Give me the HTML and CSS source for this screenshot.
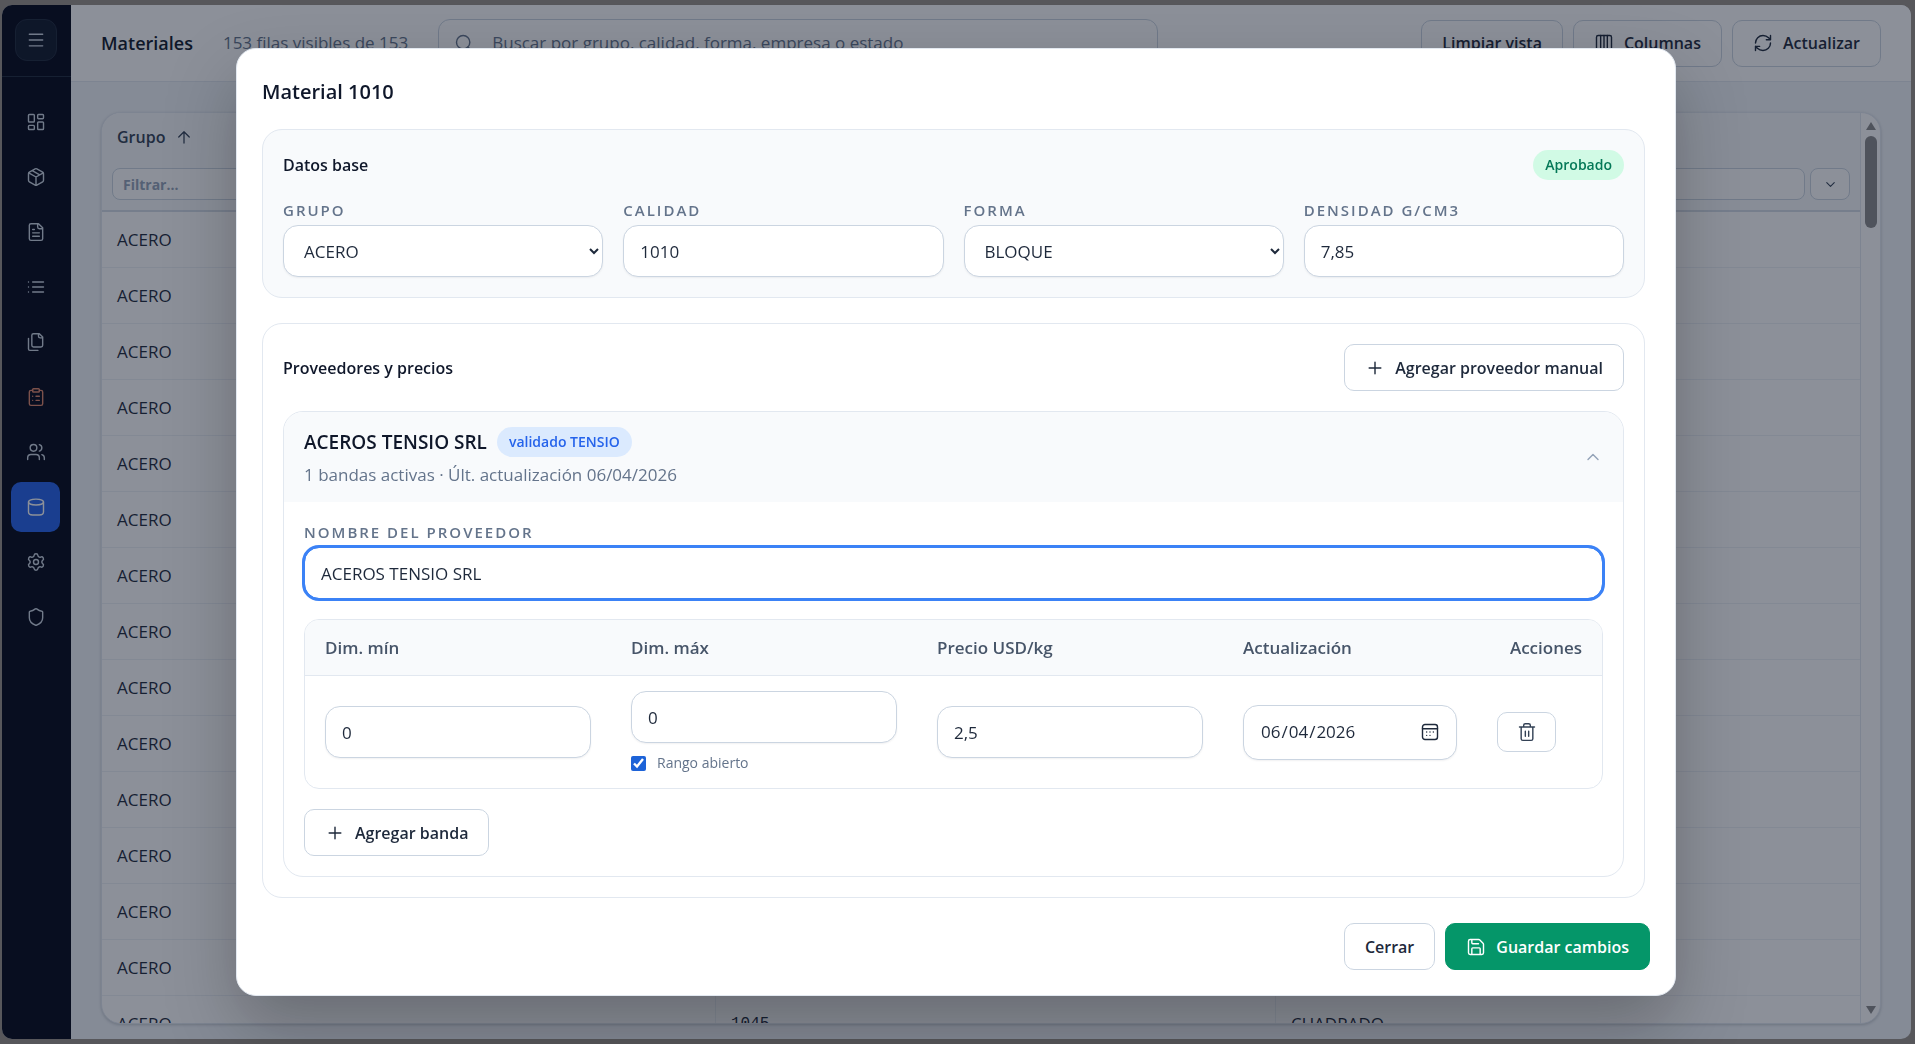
FILE: index.html
```html
<!DOCTYPE html>
<html lang="es">
<head>
    <meta charset="UTF-8">
    <meta name="viewport" content="width=device-width, initial-scale=1.0">
    <title>Materiales</title>
    <link rel="stylesheet" href="styles.css">
</head>
<body>
    <div class="app">
        <aside class="sidebar">
            <div class="sidebar-top">
                <button class="menu-btn" type="button" aria-label="Menú">
                    <svg class="icon" viewBox="0 0 24 24"><path d="M4 5h16M4 12h16M4 19h16"/></svg>
                </button>
            </div>
            <nav class="nav">
                <a href="#" aria-label="Panel"><svg class="icon" viewBox="0 0 24 24"><rect x="3" y="3" width="7" height="9" rx="1"/><rect x="14" y="3" width="7" height="5" rx="1"/><rect x="14" y="12" width="7" height="9" rx="1"/><rect x="3" y="16" width="7" height="5" rx="1"/></svg></a>
                <a href="#" aria-label="Productos"><svg class="icon" viewBox="0 0 24 24"><path d="M11 21.73a2 2 0 0 0 2 0l7-4A2 2 0 0 0 21 16V8a2 2 0 0 0-1-1.73l-7-4a2 2 0 0 0-2 0l-7 4A2 2 0 0 0 3 8v8a2 2 0 0 0 1 1.730zM12 22V12M3.290 7 12 12l8.710-5M7.500 4.270l9 5.150"/></svg></a>
                <a href="#" aria-label="Documentos"><svg class="icon" viewBox="0 0 24 24"><path d="M15 2H6a2 2 0 0 0-2 2v16a2 2 0 0 0 2 2h12a2 2 0 0 0 2-2V7zM14 2v4a2 2 0 0 0 2 2h4M10 9H8M16 13H8M16 17H8"/></svg></a>
                <a href="#" aria-label="Listas"><svg class="icon" viewBox="0 0 24 24"><path d="M3 6h.01M3 12h.01M3 18h.01M8 6h13M8 12h13M8 18h13"/></svg></a>
                <a href="#" aria-label="Copias"><svg class="icon" viewBox="0 0 24 24"><path d="M20 7h-3a2 2 0 0 1-2-2V2M9 18a2 2 0 0 1-2-2V4a2 2 0 0 1 2-2h7l4 4v10a2 2 0 0 1-2 2zM3 7.600v12.800A1.600 1.600 0 0 0 4.600 22h9.800"/></svg></a>
                <a href="#" class="alert" aria-label="Pedidos"><svg class="icon" viewBox="0 0 24 24"><rect x="8" y="2" width="8" height="4" rx="1"/><path d="M16 4h2a2 2 0 0 1 2 2v14a2 2 0 0 1-2 2H6a2 2 0 0 1-2-2V6a2 2 0 0 1 2-2h2M12 11h4M12 16h4M8 11h.01M8 16h.01"/></svg></a>
                <a href="#" aria-label="Usuarios"><svg class="icon" viewBox="0 0 24 24"><path d="M16 21v-2a4 4 0 0 0-4-4H6a4 4 0 0 0-4 4v2M22 21v-2a4 4 0 0 0-3-3.870M16 3.130a4 4 0 0 1 0 7.750"/><circle cx="9" cy="7" r="4"/></svg></a>
                <a href="#" class="active" aria-label="Materiales"><svg class="icon" viewBox="0 0 24 24"><ellipse cx="12" cy="6" rx="9" ry="3.500"/><path d="M3 6v12c0 2 2 3.500 5 3.500h8c3 0 5-1.500 5-3.500V6"/></svg></a>
                <a href="#" aria-label="Configuración"><svg class="icon" viewBox="0 0 24 24"><path d="M9.671 4.136a2.340 2.340 0 0 1 4.659 0 2.340 2.340 0 0 0 3.319 1.915 2.340 2.340 0 0 1 2.330 4.033 2.340 2.340 0 0 0 0 3.831 2.340 2.340 0 0 1-2.330 4.033 2.340 2.340 0 0 0-3.319 1.915 2.340 2.340 0 0 1-4.659 0 2.340 2.340 0 0 0-3.320-1.915 2.340 2.340 0 0 1-2.330-4.033 2.340 2.340 0 0 0 0-3.831A2.340 2.340 0 0 1 6.350 6.051a2.340 2.340 0 0 0 3.319-1.915"/><circle cx="12" cy="12" r="3"/></svg></a>
                <a href="#" aria-label="Seguridad"><svg class="icon" viewBox="0 0 24 24"><path d="M20 13c0 5-3.500 7.500-7.660 8.950a1 1 0 0 1-.670-.010C7.500 20.500 4 18 4 13V6a1 1 0 0 1 1-1c2 0 4.500-1.200 6.240-2.720a1.170 1.170 0 0 1 1.520 0C14.510 3.810 17 5 19 5a1 1 0 0 1 1 1z"/></svg></a>
            </nav>
        </aside>

        <div class="main">
            <header class="topbar">
                <h1>Materiales</h1>
                <span class="count">153 filas visibles de 153</span>
                <label class="search">
                    <svg class="icon" viewBox="0 0 24 24"><circle cx="11" cy="11" r="8"/><path d="m21 21-4.300-4.300"/></svg>
                    <input type="text" placeholder="Buscar por grupo, calidad, forma, empresa o estado" aria-label="Buscar">
                </label>
                <div class="actions">
                    <button class="btn" type="button">Limpiar vista</button>
                    <button class="btn" type="button">
                        <svg class="icon" viewBox="0 0 24 24"><rect x="3" y="3" width="18" height="18" rx="2"/><path d="M8 3v18M12 3v18M16 3v18"/></svg>
                        Columnas
                    </button>
                    <button class="btn" type="button">
                        <svg class="icon" viewBox="0 0 24 24"><path d="M3 12a9 9 0 0 1 9-9 9.750 9.750 0 0 1 6.740 2.740L21 8M21 3v5h-5M21 12a9 9 0 0 1-9 9 9.750 9.750 0 0 1-6.740-2.740L3 16M8 16H3v5"/></svg>
                        Actualizar
                    </button>
                </div>
            </header>

            <div class="content">
                <div class="grid-card">
                    <div class="grid-scroll">
                        <table class="materials">
                            <colgroup><col class="col-group"><col class="col-quality"><col></colgroup>
                            <thead>
                                <tr>
                                    <th>
                                        <div class="th-title">Grupo <svg class="icon" viewBox="0 0 24 24"><path d="m5 12 7-7 7 7M12 20V5"/></svg></div>
                                        <div class="filter"><input type="text" placeholder="Filtrar..." aria-label="Filtrar grupo"></div>
                                    </th>
                                    <th></th>
                                    <th>
                                        <div class="th-title"></div>
                                        <div class="filter">
                                            <input type="text" aria-label="Filtrar forma">
                                            <button type="button" aria-label="Opciones"><svg class="icon" viewBox="0 0 24 24"><path d="m6 9 6 6 6-6"/></svg></button>
                                        </div>
                                    </th>
                                </tr>
                            </thead>
                            <tbody>
                                <tr><td>ACERO</td><td></td><td></td></tr>
                                <tr><td>ACERO</td><td></td><td></td></tr>
                                <tr><td>ACERO</td><td></td><td></td></tr>
                                <tr><td>ACERO</td><td></td><td></td></tr>
                                <tr><td>ACERO</td><td></td><td></td></tr>
                                <tr><td>ACERO</td><td></td><td></td></tr>
                                <tr><td>ACERO</td><td></td><td></td></tr>
                                <tr><td>ACERO</td><td></td><td></td></tr>
                                <tr><td>ACERO</td><td></td><td></td></tr>
                                <tr><td>ACERO</td><td></td><td></td></tr>
                                <tr><td>ACERO</td><td></td><td></td></tr>
                                <tr><td>ACERO</td><td></td><td></td></tr>
                                <tr><td>ACERO</td><td></td><td></td></tr>
                                <tr><td>ACERO</td><td></td><td></td></tr>
                                <tr><td>ACERO</td><td class="mono">1045</td><td>CUADRADO</td></tr>
                            </tbody>
                        </table>
                    </div>
                    <div class="scrollbar">
                        <svg viewBox="0 0 12 10"><path d="M6 1 11 9H1z"/></svg>
                        <div class="thumb"></div>
                        <svg viewBox="0 0 12 10"><path d="M6 9 1 1h10z"/></svg>
                    </div>
                </div>
            </div>
        </div>
    </div>

    <div class="overlay">
        <div class="modal" role="dialog" aria-labelledby="modal-title">
            <h2 id="modal-title">Material 1010</h2>

            <section class="panel panel-base">
                <div class="panel-head">
                    <h3>Datos base</h3>
                    <span class="badge badge-green">Aprobado</span>
                </div>
                <div class="fields">
                    <div class="field">
                        <label for="grupo">Grupo</label>
                        <select id="grupo"><option>ACERO</option></select>
                    </div>
                    <div class="field">
                        <label for="calidad">Calidad</label>
                        <input type="text" id="calidad" value="1010">
                    </div>
                    <div class="field">
                        <label for="forma">Forma</label>
                        <select id="forma"><option>BLOQUE</option></select>
                    </div>
                    <div class="field">
                        <label for="densidad">Densidad g/cm3</label>
                        <input type="text" id="densidad" value="7,85">
                    </div>
                </div>
            </section>

            <section class="panel">
                <div class="panel-head">
                    <h3>Proveedores y precios</h3>
                    <button class="btn" type="button">
                        <svg class="icon" viewBox="0 0 24 24"><path d="M5 12h14M12 5v14"/></svg>
                        Agregar proveedor manual
                    </button>
                </div>

                <div class="supplier">
                    <div class="supplier-head">
                        <div>
                            <div class="supplier-name">ACEROS TENSIO SRL <span class="badge badge-blue">validado TENSIO</span></div>
                            <p>1 bandas activas · Últ. actualización 06/04/2026</p>
                        </div>
                        <svg class="icon" viewBox="0 0 24 24"><path d="m18 15-6-6-6 6"/></svg>
                    </div>
                    <div class="supplier-body">
                        <div class="field">
                            <label for="proveedor">Nombre del proveedor</label>
                            <input type="text" id="proveedor" class="focused" value="ACEROS TENSIO SRL">
                        </div>

                        <div class="bands-wrap">
                            <table class="bands">
                                <colgroup><col><col><col><col class="col-date"><col class="col-actions"></colgroup>
                                <thead>
                                    <tr>
                                        <th>Dim. mín</th>
                                        <th>Dim. máx</th>
                                        <th>Precio USD/kg</th>
                                        <th>Actualización</th>
                                        <th class="right">Acciones</th>
                                    </tr>
                                </thead>
                                <tbody>
                                    <tr>
                                        <td><input type="text" value="0" aria-label="Dim. mín"></td>
                                        <td>
                                            <input type="text" value="0" aria-label="Dim. máx">
                                            <label class="check"><input type="checkbox" checked> Rango abierto</label>
                                        </td>
                                        <td><input type="text" value="2,5" aria-label="Precio USD/kg"></td>
                                        <td>
                                            <div class="date">
                                                <input type="date" value="2026-06-04" aria-label="Actualización">
                                                <svg class="icon" viewBox="0 0 24 24"><rect x="3" y="3" width="18" height="18" rx="3"/><path d="M3 8h18M8 12h.01M12 12h.01M16 12h.01M8 16h.01M12 16h.01"/></svg>
                                            </div>
                                        </td>
                                        <td>
                                            <button class="trash" type="button" aria-label="Eliminar">
                                                <svg class="icon" viewBox="0 0 24 24"><path d="M3 6h18M19 6v14a2 2 0 0 1-2 2H7a2 2 0 0 1-2-2V6M8 6V4a2 2 0 0 1 2-2h4a2 2 0 0 1 2 2v2M10 11v6M14 11v6"/></svg>
                                            </button>
                                        </td>
                                    </tr>
                                </tbody>
                            </table>
                        </div>

                        <button class="btn" type="button">
                            <svg class="icon" viewBox="0 0 24 24"><path d="M5 12h14M12 5v14"/></svg>
                            Agregar banda
                        </button>
                    </div>
                </div>
            </section>

            <footer class="modal-footer">
                <button class="btn" type="button">Cerrar</button>
                <button class="btn btn-save" type="button">
                    <svg class="icon" viewBox="0 0 24 24"><path d="M15.200 3a2 2 0 0 1 1.400.600l3.800 3.800a2 2 0 0 1 .600 1.400V19a2 2 0 0 1-2 2H5a2 2 0 0 1-2-2V5a2 2 0 0 1 2-2zM17 21v-7a1 1 0 0 0-1-1H8a1 1 0 0 0-1 1v7M7 3v4a1 1 0 0 0 1 1h7"/></svg>
                    Guardar cambios
                </button>
            </footer>
        </div>
    </div>

    <script>
        const proveedor = document.getElementById("proveedor");
        proveedor.focus();
        proveedor.setSelectionRange(proveedor.value.length, proveedor.value.length);
    </script>
</body>
</html>
```
FILE: styles.css
```css
* {
    box-sizing: border-box;
}

body {
    margin: 0;
    height: 100vh;
    padding: 5px 4px 5px 2px;
    overflow: hidden;
    background: #9a9288;
    color: #1e293b;
    font-family: "Segoe UI", "Open Sans", sans-serif;
    font-size: 17px;
    line-height: 24px;
}

h1, h2, h3, p {
    margin: 0;
}

input, select, button {
    font: inherit;
    color: inherit;
}

.icon {
    width: 20px;
    height: 20px;
    flex: none;
    fill: none;
    stroke: currentColor;
    stroke-width: 1.7;
    stroke-linecap: round;
    stroke-linejoin: round;
}

.app {
    display: flex;
    height: 100%;
    border-radius: 10px;
    overflow: hidden;
    background: #f1f5f9;
}

/* sidebar */
.sidebar {
    width: 69px;
    flex: none;
    background: #020617;
    color: #cbd5e1;
}

.sidebar-top {
    height: 72px;
    padding: 14px 13px;
    border-bottom: 1px solid #1e293b;
}

.menu-btn {
    display: flex;
    align-items: center;
    justify-content: center;
    width: 42px;
    height: 42px;
    padding: 0;
    border: 1px solid #1e293b;
    border-radius: 12px;
    background: #0f172a;
}

.nav {
    display: flex;
    flex-direction: column;
    gap: 5px;
    padding: 20px 11px 20px 9px;
}

.nav a {
    display: flex;
    align-items: center;
    justify-content: center;
    height: 50px;
    border-radius: 10px;
    color: inherit;
}

.nav a.alert {
    color: #e0876a;
}

.nav a.active {
    background: #2563eb;
    color: #fff;
}

/* main area */
.main {
    flex: 1;
    min-width: 0;
    display: flex;
    flex-direction: column;
}

.topbar {
    display: flex;
    align-items: center;
    height: 77px;
    padding: 0 30px;
    background: #fff;
    border-bottom: 1px solid #e2e8f0;
}

.topbar h1 {
    font-size: 18px;
    font-weight: 600;
    color: #0f172a;
}

.count {
    margin: 0 30px;
    color: #64748b;
}

.search {
    display: flex;
    align-items: center;
    gap: 16px;
    flex: 1;
    max-width: 720px;
    height: 48px;
    padding: 0 15px;
    border: 1px solid #cbd5e1;
    border-radius: 12px;
    color: #64748b;
}

.search input {
    flex: 1;
    border: 0;
    outline: 0;
    background: none;
}

.search input::placeholder {
    color: #64748b;
}

.actions {
    display: flex;
    gap: 10px;
    margin-left: auto;
}

.btn {
    display: inline-flex;
    align-items: center;
    gap: 10px;
    height: 47px;
    padding: 0 20px;
    border: 1px solid #cbd5e1;
    border-radius: 10px;
    background: #fff;
    color: #1e293b;
    font-size: 16px;
    font-weight: 600;
    white-space: nowrap;
}

.content {
    flex: 1;
    min-height: 0;
    padding: 30px 30px 15px;
}

.grid-card {
    display: flex;
    height: 100%;
    border: 1px solid #e2e8f0;
    border-radius: 20px;
    overflow: hidden;
    background: #fff;
    box-shadow: 0 1px 3px rgba(15, 23, 42, 0.2);
}

.grid-scroll {
    flex: 1;
    overflow: hidden;
}

.materials {
    width: 100%;
    table-layout: fixed;
    border-collapse: separate;
    border-spacing: 0;
}

.col-group {
    width: 613px;
}

.col-quality {
    width: 560px;
}

.materials th {
    height: 99px;
    padding: 4px 10px 10px;
    border-bottom: 2px solid #d5dde7;
    background: #f8fafc;
    color: #334155;
    font-size: 16px;
    font-weight: 600;
    text-align: left;
}

.th-title {
    display: flex;
    align-items: center;
    gap: 10px;
    height: 40px;
    padding: 0 5px;
}

.th-title .icon {
    width: 18px;
    height: 18px;
}

.filter {
    display: flex;
    gap: 5px;
    margin-top: 11px;
}

.filter input,
.filter button {
    height: 32px;
    border: 1px solid #cbd5e1;
    border-radius: 8px;
    background: #fff;
}

.filter input {
    flex: 1;
    min-width: 0;
    padding: 0 10px;
    font-size: 14px;
    font-weight: 700;
}

.filter input::placeholder {
    color: #94a3b8;
}

.filter button {
    display: flex;
    align-items: center;
    justify-content: center;
    width: 40px;
    padding: 0;
}

.filter .icon {
    width: 15px;
    height: 15px;
}

.materials td {
    height: 56px;
    padding: 0 15px;
    border-bottom: 1px solid #edf1f6;
}

.materials td + td {
    border-left: 1px solid #edf1f6;
}

.materials .mono {
    font-family: Consolas, "Liberation Mono", monospace;
    font-size: 16px;
}

.scrollbar {
    display: flex;
    flex-direction: column;
    align-items: center;
    width: 20px;
    padding: 8px 0;
    border-left: 1px solid #e2e8f0;
}

.scrollbar svg {
    width: 12px;
    height: 10px;
    fill: #8a8a8a;
}

.scrollbar .thumb {
    width: 12px;
    height: 92px;
    margin: 5px 0 auto;
    border-radius: 6px;
    background: #8a8a8a;
}

/* modal */
.overlay {
    position: fixed;
    inset: 0;
    display: flex;
    align-items: center;
    justify-content: center;
    padding-right: 3px;
    background: rgba(15, 23, 42, 0.48);
}

.modal {
    width: 100%;
    max-width: 1440px;
    padding: 25px;
    border: 1px solid #e2e8f0;
    border-radius: 20px;
    background: #fff;
    box-shadow: 0 30px 70px rgba(0, 0, 0, 0.26);
}

.modal h2 {
    margin-bottom: 20px;
    font-size: 20px;
    font-weight: 600;
    line-height: 35px;
    color: #0f172a;
}

.panel {
    margin: 0 5px 25px 0;
    padding: 20px;
    border: 1px solid #e2e8f0;
    border-radius: 20px;
}

.panel-base {
    background: #f8fafc;
}

.panel-head {
    display: flex;
    align-items: center;
    justify-content: space-between;
    margin-bottom: 20px;
}

.panel h3 {
    font-size: 16px;
    font-weight: 600;
    color: #0f172a;
}

.badge {
    height: 30px;
    border-radius: 15px;
    padding: 0 12px;
    font-size: 14px;
    font-weight: 600;
    line-height: 30px;
}

.badge-green {
    background: #d1fae5;
    color: #047857;
}

.badge-blue {
    background: #dbeafe;
    color: #2563eb;
}

.fields {
    display: grid;
    grid-template-columns: repeat(4, 1fr);
    gap: 20px;
}

.field label {
    display: block;
    margin-bottom: 5px;
    color: #64748b;
    font-size: 15px;
    font-weight: 600;
    line-height: 20px;
    letter-spacing: 2px;
    text-transform: uppercase;
}

.field input,
.field select,
.bands input[type="text"],
.bands input[type="date"] {
    display: block;
    width: 100%;
    height: 52px;
    padding: 0 16px;
    border: 1px solid #cbd5e1;
    border-radius: 15px;
    background: #fff;
    box-shadow: 0 1px 2px rgba(15, 23, 42, 0.06);
}

.field input.focused {
    border-color: #3b82f6;
    outline: 3px solid #3b82f6;
    outline-offset: -1px;
}

.supplier {
    border: 1px solid #e2e8f0;
    border-radius: 20px;
    overflow: hidden;
}

.supplier-head {
    display: flex;
    align-items: center;
    justify-content: space-between;
    padding: 15px 20px;
    background: #f8fafc;
}

.supplier-head > .icon {
    color: #94a3b8;
}

.supplier-name {
    display: flex;
    align-items: center;
    gap: 10px;
    color: #0f172a;
    font-size: 19px;
    font-weight: 600;
}

.supplier-head p {
    margin-top: 5px;
    line-height: 25px;
    color: #64748b;
}

.supplier-body {
    padding: 20px;
}

.bands-wrap {
    margin: 20px 0;
    border: 1px solid #e2e8f0;
    border-radius: 15px;
    overflow: hidden;
}

.bands {
    width: 100%;
    table-layout: fixed;
    border-collapse: separate;
    border-spacing: 0;
}

.col-date {
    width: 254px;
}

.col-actions {
    width: 125px;
}

.bands th {
    height: 56px;
    padding: 0 20px;
    border-bottom: 1px solid #e2e8f0;
    background: #f8fafc;
    color: #475569;
    font-weight: 600;
    text-align: left;
}

.bands th.right {
    text-align: right;
}

.bands td {
    padding: 15px 20px;
}

.bands input[type="date"] {
    height: 55px;
}

.date {
    position: relative;
}

.date .icon {
    position: absolute;
    right: 17px;
    top: 17px;
    pointer-events: none;
}

.date input::-webkit-calendar-picker-indicator {
    opacity: 0;
}

.check {
    display: flex;
    align-items: center;
    gap: 11px;
    margin-top: 10px;
    color: #64748b;
    font-size: 14px;
    line-height: 20px;
}

.check input {
    width: 15px;
    height: 15px;
    margin: 0;
    accent-color: #1d63d8;
}

.trash {
    display: flex;
    align-items: center;
    justify-content: center;
    width: 59px;
    height: 40px;
    padding: 0;
    border: 1px solid #cbd5e1;
    border-radius: 10px;
    background: #fff;
    color: #334155;
}

.modal-footer {
    display: flex;
    justify-content: flex-end;
    gap: 10px;
}

.btn-save {
    border-color: #059669;
    background: #059669;
    color: #fff;
}
```
